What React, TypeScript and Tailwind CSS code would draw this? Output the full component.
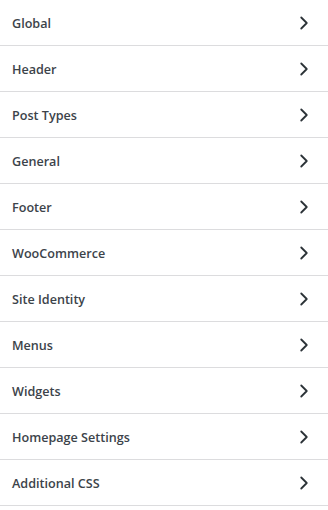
import { ChevronRight } from 'lucide-react'

const sections = [
  'Global',
  'Header',
  'Post Types',
  'General',
  'Footer',
  'WooCommerce',
  'Site Identity',
  'Menus',
  'Widgets',
  'Homepage Settings',
  'Additional CSS',
]

export default function App() {
  return (
    <div className="w-[328px] h-[510px] bg-white" style={{ fontFamily: '"Open Sans", "Noto Sans", sans-serif' }}>
      <ul>
        {sections.map((name) => (
          <li
            key={name}
            className="flex items-center justify-between h-[46px] pl-3 pr-[13px] border-b border-[#dcdcde] text-[12.6px] font-semibold text-[#3c434a]"
          >
            <span className="pt-[4px]">{name}</span>
            <ChevronRight className="w-[22px] h-[22px] text-[#2c3338]" strokeWidth={2} />
          </li>
        ))}
      </ul>
    </div>
  )
}
